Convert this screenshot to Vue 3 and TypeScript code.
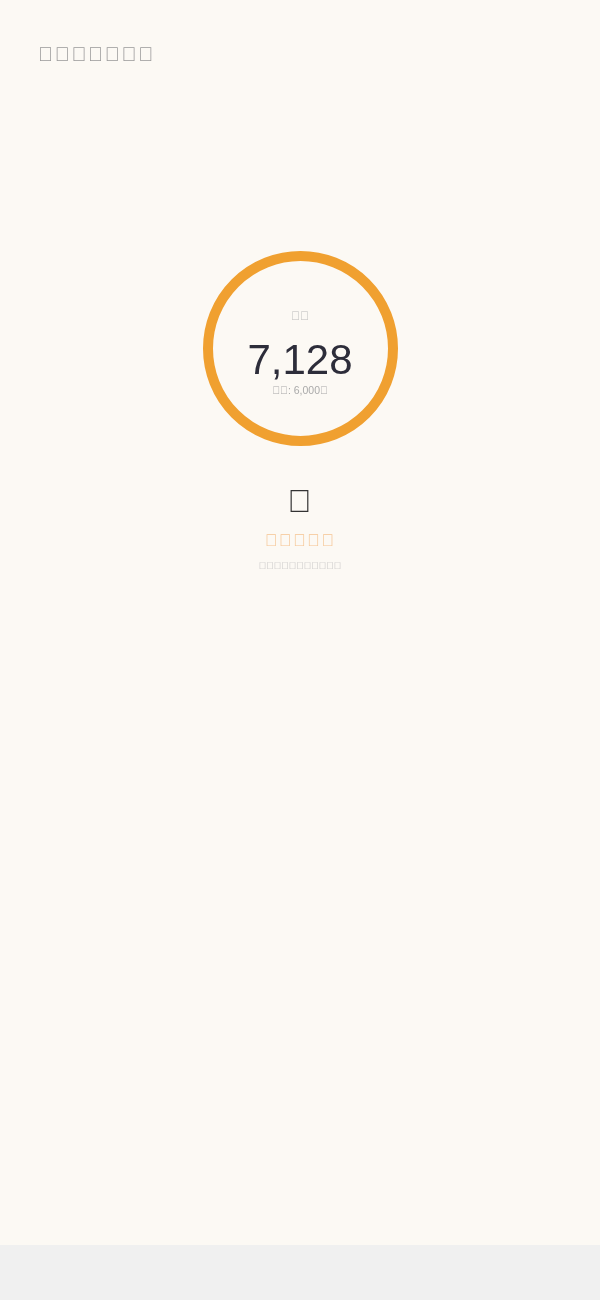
<script setup lang="ts">
// the reference shows missing-glyph boxes, so these strings use a code point with no glyph
const box = '\uE000'
const title = box.repeat(7)
const label = box.repeat(2)
const goal = `${box.repeat(2)}: 6,000${box}`
const headline = box.repeat(5)
const note = box.repeat(11)
</script>

<template>
    <div class="page">
        <h1 class="title">{{ title }}</h1>
        <div class="body">
            <div class="ring">
                <span class="ring-label">{{ label }}</span>
                <span class="count">7,128</span>
                <span class="goal">{{ goal }}</span>
            </div>
            <div class="icon">{{ box }}</div>
            <div class="headline">{{ headline }}</div>
            <div class="note">{{ note }}</div>
        </div>
    </div>
</template>

<style scoped>
.page {
    height: 1245px;
    box-sizing: border-box;
    padding: 41px 38px 0;
    background: #fcf9f4;
    font-family: "Liberation Sans", sans-serif;
}
.title {
    margin: 0;
    font-size: 20px;
    line-height: 26px;
    font-weight: 400;
    letter-spacing: 1.7px;
    color: #999;
    will-change: transform;
}
.body {
    display: flex;
    flex-direction: column;
    align-items: center;
    padding-top: 184px;
    will-change: transform;
}
.ring {
    width: 195px;
    height: 195px;
    box-sizing: border-box;
    border: 10px solid #f0a030;
    border-radius: 50%;
    display: flex;
    flex-direction: column;
    align-items: center;
    padding-top: 47px;
}
.ring-label {
    font-size: 12px;
    line-height: 16px;
    color: #bbb;
}
.count {
    margin-top: 11px;
    font-size: 42px;
    line-height: 50px;
    color: #2d2d3a;
}
.goal {
    margin-top: -2px;
    font-size: 10.5px;
    line-height: 14px;
    color: #aaa;
}
.icon {
    margin-top: 36px;
    margin-right: 1px;
    font-size: 32px;
    line-height: 38px;
    color: #333;
}
.headline {
    margin-top: 10px;
    font-size: 17px;
    line-height: 22px;
    letter-spacing: 1.4px;
    color: #f5c592;
}
.note {
    margin-top: 7px;
    font-size: 10px;
    line-height: 14px;
    color: #bbb;
}
</style>

<style>
body { background: #f0f0f0; }
</style>
